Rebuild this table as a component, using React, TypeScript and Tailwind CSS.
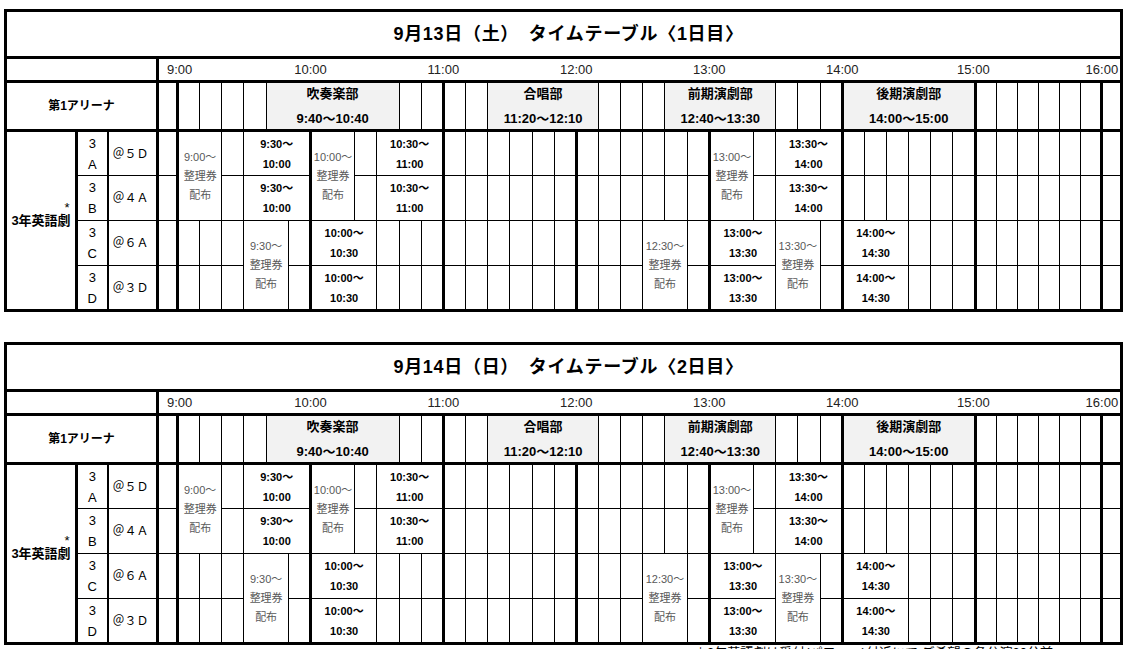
import React from "react";

type Kind = "gray" | "ticket" | "time";
type Seg = { c: number; span: number; rows?: number; kind: Kind; lines: string[] };

// column index: 0 = pre column, 1..42 = 10-minute slots from 9:00, 43 = post column
const HOUR_STARTS = new Set([1, 7, 13, 19, 25, 31, 37, 43]);
const LAST = 43;

const arena: Seg[] = [
  { c: 4, span: 6, kind: "gray", lines: ["吹奏楽部", "9:40〜10:40"] },
  { c: 14, span: 5, kind: "gray", lines: ["合唱部", "11:20〜12:10"] },
  { c: 22, span: 5, kind: "gray", lines: ["前期演劇部", "12:40〜13:30"] },
  { c: 30, span: 6, kind: "gray", lines: ["後期演劇部", "14:00〜15:00"] },
];

const ticket = (from: string) => [from + "〜", "整理券", "配布"];

const plays: Seg[][] = [
  [
    { c: 0, span: 2, rows: 2, kind: "ticket", lines: ticket("9:00") },
    { c: 3, span: 3, kind: "time", lines: ["9:30〜", "10:00"] },
    { c: 6, span: 2, rows: 2, kind: "ticket", lines: ticket("10:00") },
    { c: 9, span: 3, kind: "time", lines: ["10:30〜", "11:00"] },
    { c: 24, span: 2, rows: 2, kind: "ticket", lines: ticket("13:00") },
    { c: 27, span: 3, kind: "time", lines: ["13:30〜", "14:00"] },
  ],
  [
    { c: 3, span: 3, kind: "time", lines: ["9:30〜", "10:00"] },
    { c: 9, span: 3, kind: "time", lines: ["10:30〜", "11:00"] },
    { c: 27, span: 3, kind: "time", lines: ["13:30〜", "14:00"] },
  ],
  [
    { c: 3, span: 2, rows: 2, kind: "ticket", lines: ticket("9:30") },
    { c: 6, span: 3, kind: "time", lines: ["10:00〜", "10:30"] },
    { c: 21, span: 2, rows: 2, kind: "ticket", lines: ticket("12:30") },
    { c: 24, span: 3, kind: "time", lines: ["13:00〜", "13:30"] },
    { c: 27, span: 2, rows: 2, kind: "ticket", lines: ticket("13:30") },
    { c: 30, span: 3, kind: "time", lines: ["14:00〜", "14:30"] },
  ],
  [
    { c: 6, span: 3, kind: "time", lines: ["10:00〜", "10:30"] },
    { c: 24, span: 3, kind: "time", lines: ["13:00〜", "13:30"] },
    { c: 30, span: 3, kind: "time", lines: ["14:00〜", "14:30"] },
  ],
];

const classes = [
  ["A", "＠５Ｄ"],
  ["B", "＠４Ａ"],
  ["C", "＠６Ａ"],
  ["D", "＠３Ｄ"],
];

function edges(i: number, span: number, topThick: boolean, bottomThick: boolean) {
  const end = i + span;
  const l = i === 0 || HOUR_STARTS.has(i) ? "border-l-[3px]" : "border-l";
  const r = end > LAST || HOUR_STARTS.has(end) ? "border-r-[3px]" : "border-r";
  const t = topThick ? "border-t-[3px]" : "border-t";
  const b = bottomThick ? "border-b-[3px]" : "border-b";
  return `${l} ${r} ${t} ${b} border-black`;
}

const kindClass: Record<Kind, string> = {
  gray: "bg-[#f2f2f2] text-center text-[13px] font-bold",
  ticket: "text-center text-[11px] leading-[19px] text-[#595959]",
  time: "text-center text-[11px] font-bold leading-[20px]",
};

function gridCells(segs: Seg[], skip: Set<number>, row: number, lastRow: number, topThick: boolean) {
  const cells: React.ReactNode[] = [];
  let i = 0;
  while (i <= LAST) {
    if (skip.has(i)) {
      i++;
      continue;
    }
    const seg = segs.find((s) => s.c + 1 === i);
    if (seg) {
      const rs = seg.rows ?? 1;
      cells.push(
        <td
          key={i}
          colSpan={seg.span}
          rowSpan={rs}
          className={`${edges(i, seg.span, topThick, row + rs - 1 === lastRow)} ${kindClass[seg.kind]}`}
        >
          <div className={seg.kind === "gray" ? "flex flex-col items-center gap-[5px] leading-[20px]" : ""}>
            {seg.lines.map((t) => (
              <div key={t} className="whitespace-nowrap">
                {t}
              </div>
            ))}
          </div>
        </td>
      );
      i += seg.span;
    } else {
      cells.push(<td key={i} className={edges(i, 1, topThick, row === lastRow)} />);
      i++;
    }
  }
  return cells;
}

function skipsFor(r: number) {
  const s = new Set<number>();
  if (r === 0) return s;
  for (const seg of plays[r - 1]) {
    if ((seg.rows ?? 1) > 1) {
      for (let k = 0; k < seg.span; k++) s.add(seg.c + 1 + k);
    }
  }
  return s;
}

function Day({ title }: { title: string }) {
  return (
    <table className="w-[1116px] table-fixed border-collapse">
      <colgroup>
        <col className="w-[71px]" />
        <col className="w-[31px]" />
        <col className="w-[50px]" />
        <col className="w-[20px]" />
        {Array.from({ length: 36 }, (_, k) => (
          <col key={`a${k}`} className="w-[22.17px]" />
        ))}
        {Array.from({ length: 6 }, (_, k) => (
          <col key={`b${k}`} className="w-[21px]" />
        ))}
        <col className="w-[20px]" />
      </colgroup>
      <tbody>
        <tr className="h-[47px]">
          <td
            colSpan={47}
            className="border-[3px] border-black pl-[10px] text-center text-[18px] font-bold tracking-[0.7px]"
          >
            {title}
          </td>
        </tr>
        <tr className="h-[24px]">
          <td colSpan={3} className="border-[3px] border-black" />
          <td colSpan={4} className="border-y-[3px] border-black pl-[8px] text-left text-[13px] text-[#222]">
            9:00
          </td>
          {[10, 11, 12, 13, 14, 15].map((h) => (
            <td key={h} colSpan={6} className="border-y-[3px] border-black text-center text-[13px] text-[#222]">
              {h}:00
            </td>
          ))}
          <td colSpan={4} className="border-y-[3px] border-r-[3px] border-black pr-[2px] text-right text-[13px] text-[#222]">
            16:00
          </td>
        </tr>
        <tr className="h-[49px]">
          <td colSpan={3} className="border-[3px] border-black text-center text-[12px] font-bold">
            第1アリーナ
          </td>
          {gridCells(arena, new Set(), 0, 0, true)}
        </tr>
        {plays.map((segs, r) => (
          <tr key={r} className="h-[45px]">
            {r === 0 && (
              <td rowSpan={4} className="border-[3px] border-black text-center text-[13px] font-bold">
                3年英語
                <span className="relative">
                  劇
                  <span className="absolute -top-[11px] left-[7px] text-[13px] font-normal leading-[12px]">*</span>
                </span>
              </td>
            )}
            <td
              className={`${r === 0 ? "border-t-[3px]" : "border-t"} ${r === 3 ? "border-b-[3px]" : "border-b"} border-l-[3px] border-r-[2px] border-black text-center text-[13px] leading-[21px]`}
            >
              <div>3</div>
              <div>{classes[r][0]}</div>
            </td>
            <td
              className={`${r === 0 ? "border-t-[3px]" : "border-t"} ${r === 3 ? "border-b-[3px]" : "border-b"} border-r-[3px] border-black pl-[4px] text-left text-[12px]`}
            >
              {classes[r][1]}
            </td>
            {gridCells(segs, skipsFor(r), r, 3, r === 0)}
          </tr>
        ))}
      </tbody>
    </table>
  );
}

export default function App() {
  return (
    <div className="min-h-screen bg-white pl-[4px] pt-[9px] font-['Liberation_Sans','Noto_Sans_CJK_JP',sans-serif] text-black">
      <Day title="9月13日（土）　タイムテーブル〈1日目〉" />
      <div className="h-[30px]" />
      <Day title="9月14日（日）　タイムテーブル〈2日目〉" />
      <p className="pl-[690px] text-[13px] leading-[16px]">
        ＊3年英語劇は受付(パローニ)付近にて ご希望の各公演30分前
      </p>
    </div>
  );
}
